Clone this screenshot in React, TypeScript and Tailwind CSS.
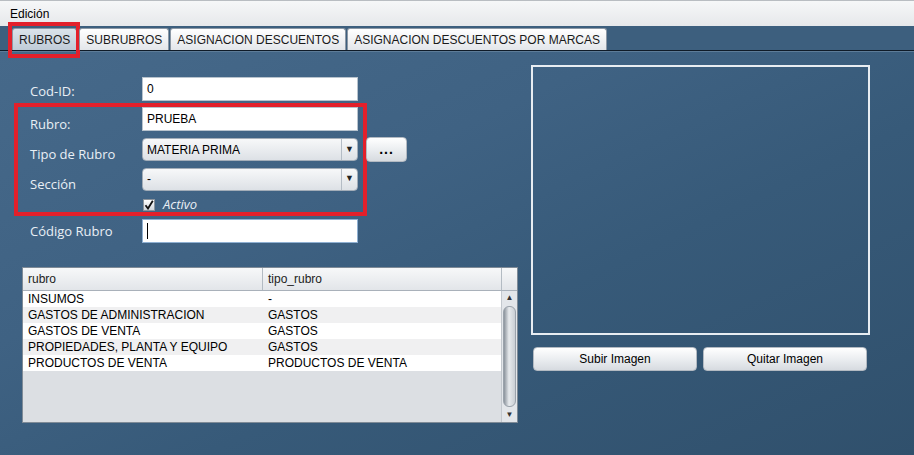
import React from 'react';

const rows: [string, string][] = [
  ['INSUMOS', '-'],
  ['GASTOS DE ADMINISTRACION', 'GASTOS'],
  ['GASTOS DE VENTA', 'GASTOS'],
  ['PROPIEDADES, PLANTA Y EQUIPO', 'GASTOS'],
  ['PRODUCTOS DE VENTA', 'PRODUCTOS DE VENTA'],
];

const tabs = ['RUBROS', 'SUBRUBROS', 'ASIGNACION DESCUENTOS', 'ASIGNACION DESCUENTOS POR MARCAS'];

const Label = ({ children, className }: { children: React.ReactNode; className?: string }) => (
  <div className={`w-[112px] shrink-0 text-[13px] text-[#e9eff5] font-['Open_Sans',sans-serif] ${className ?? ''}`}>
    {children}
  </div>
);

const TextInput = ({ value, focused }: { value?: string; focused?: boolean }) => (
  <div
    className={`w-[216px] h-[24px] bg-white flex items-center px-[4px] text-[12px] text-black border ${
      focused ? 'border-[#8fb0d2]' : 'border-[#b8c3cd]'
    }`}
  >
    {value}
    {focused && <span className="w-px h-[16px] bg-black" />}
  </div>
);

const Combo = ({ value }: { value: string }) => (
  <div className="w-[216px] h-[23px] rounded-[4px] border border-[#a3adb8] bg-[linear-gradient(#f7f8f9,#dde1e6)] flex items-center text-[12px] text-black">
    <span className="flex-1 pl-[4px]">{value}</span>
    <span className="w-[16px] h-full border-l border-[#b4bcc5] flex items-center justify-center text-[9px] text-[#222]">▼</span>
  </div>
);

const Btn = ({ children, className }: { children: React.ReactNode; className?: string }) => (
  <div
    className={`h-[24px] rounded-[4px] border border-[#b3bac2] bg-[linear-gradient(#ffffff,#e9ecef_55%,#d7dbe0)] flex items-center justify-center text-[12px] text-black ${className ?? ''}`}
  >
    {children}
  </div>
);

export default function App() {
  return (
    <div className="w-[914px] h-[455px] overflow-hidden flex flex-col font-['Liberation_Sans',Arial,sans-serif]">
      {/* menu bar */}
      <div className="h-[26px] shrink-0 border-t border-[#b9bdc2] bg-[linear-gradient(#f6f7f8,#e6e8eb)] flex items-center pl-[10px] text-[12px] text-black">
        Edición
      </div>

      {/* tab strip */}
      <div className="h-[25px] shrink-0 bg-[#3d5f7e] flex items-end pl-[12px] gap-[1px] border-b border-[#0f1b28] relative">
        {tabs.map((t, i) => (
          <div
            key={t}
            className={`relative h-[22px] px-[6px] rounded-t-[3px] border border-b-0 border-[#8c98a5] flex items-center text-[12px] text-[#1a1a1a] ${
              i === 0 ? 'bg-[linear-gradient(#dbe3ea,#bfcbd7)] mr-[1px]' : 'bg-[linear-gradient(#ffffff,#e3e6ea)]'
            } ${i === 3 ? 'px-[5px]' : ''}`}
          >
            {t}
            {i === 0 && <div className="absolute -left-[5px] -right-[4px] -top-[7px] -bottom-[8px] border-4 border-[#e3202b]" />}
          </div>
        ))}
      </div>

      {/* content */}
      <div className="flex-1 flex border-t border-[#5d7c98] bg-[linear-gradient(155deg,#46698a_0%,#3f6283_35%,#375a79_60%,#30506c_100%)]">
        {/* left column */}
        <div className="w-[530px] shrink-0 flex flex-col pt-[25px]">
          <div className="flex items-center pl-[30px]">
            <Label className="pt-[5px]">Cod-ID:</Label>
            <TextInput value="0" />
          </div>

          <div className="ml-[14px] mt-[1px] w-[353px] h-[113px] border-4 border-[#e3202b] flex flex-col pt-[1px]">
            <div className="flex items-center pl-[12px] h-[23px]">
              <Label className="pt-[11px]">Rubro:</Label>
              <TextInput value="PRUEBA" />
            </div>
            <div className="flex items-center pl-[12px] mt-[7px] h-[24px] w-[400px]">
              <Label className="pt-[11px]">Tipo de Rubro</Label>
              <Combo value="MATERIA PRIMA" />
              <Btn className="ml-[8px] w-[41px] h-[25px] text-[14px] font-bold tracking-[1px]">...</Btn>
            </div>
            <div className="flex items-center pl-[12px] mt-[6px] h-[23px]">
              <Label className="pt-[11px]">Sección</Label>
              <Combo value="-" />
            </div>
            <div className="flex items-center pl-[125px] mt-[7px] h-[14px]">
              <span className="w-[12px] h-[12px] border border-[#8a939c] bg-[linear-gradient(#ffffff,#cfd4da)] flex items-center justify-center">
                <svg width="10" height="10" viewBox="0 0 10 10">
                  <path d="M1.5 5.2 L4 8.5 L8.8 0.8" fill="none" stroke="#111" strokeWidth="1.8" />
                </svg>
              </span>
              <span className="ml-[8px] pt-[1px] text-[13px] italic text-[#e9eff5] font-['Open_Sans',sans-serif]">Activo</span>
            </div>
          </div>

          <div className="flex items-center pl-[30px] mt-[3px]">
            <Label className="pt-[3px]">Código Rubro</Label>
            <TextInput focused />
          </div>

          {/* table */}
          <div className="ml-[22px] mt-[24px] w-[496px] h-[156px] border border-[#7f8b97] bg-[#dcdfe3] flex flex-col text-[12px] text-black">
            <div className="h-[23px] shrink-0 flex border-b border-[#a9b1ba] bg-[linear-gradient(#f7f8f9,#e2e5e9)] text-[#222]">
              <div className="w-[240px] px-[5px] flex items-center border-r border-[#b3bbc3]">rubro</div>
              <div className="w-[239px] px-[5px] flex items-center border-r border-[#b3bbc3]">tipo_rubro</div>
              <div className="flex-1" />
            </div>
            <div className="flex-1 flex">
              <div className="flex-1 flex flex-col">
                {rows.map(([a, b], i) => (
                  <div key={a} className={`h-[16px] flex items-center pt-[1px] ${i % 2 ? 'bg-[#f0f0f1]' : 'bg-white'}`}>
                    <span className="w-[240px] pl-[5px]">{a}</span>
                    <span className="pl-[5px]">{b}</span>
                  </div>
                ))}
              </div>
              <div className="w-[16px] shrink-0 border-l border-[#c3c8ce] bg-[#e3e6ea] flex flex-col items-center py-[2px]">
                <span className="text-[8px] leading-[10px] text-[#333]">▲</span>
                <div className="flex-1 w-[13px] my-[3px] rounded-[6px] border border-[#9aa2ab] bg-[linear-gradient(90deg,#8b939c,#e7eaed_45%,#c9ced4)]" />
                <span className="text-[8px] leading-[10px] text-[#333]">▼</span>
              </div>
            </div>
          </div>
        </div>

        {/* right column */}
        <div className="flex flex-col pt-[13px] pl-[1px]">
          <div className="w-[339px] h-[270px] border-2 border-[#e8edf2]" />
          <div className="flex gap-[6px] mt-[12px] pl-[2px]">
            <Btn className="w-[164px]">Subir Imagen</Btn>
            <Btn className="w-[164px]">Quitar Imagen</Btn>
          </div>
        </div>
      </div>
    </div>
  );
}
